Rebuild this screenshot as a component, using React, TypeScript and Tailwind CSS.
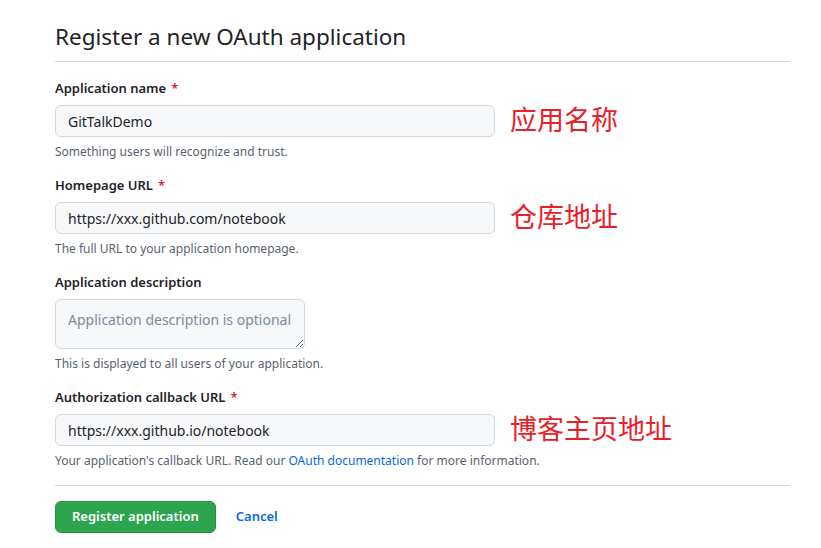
import React from 'react';

const font = { fontFamily: '"Noto Sans", "Liberation Sans", sans-serif' };

const Field: React.FC<{ label: string; required?: boolean; children: React.ReactNode; hint: React.ReactNode; note?: string }> = ({
  label,
  required,
  children,
  hint,
  note,
}) => (
  <div className="mb-[15px]">
    <div className="h-[20px] flex items-center text-[13px] font-semibold text-[#1f2328] mb-[6px]">
      {label}
      {required && <span className="text-[#d1242f] ml-[5px]">*</span>}
    </div>
    <div className="flex items-center">
      {children}
      {note && (
        <span className="ml-[15px] -mt-[6px] text-[27px] leading-none text-[#e8202a] font-['Noto_Sans_CJK_SC',sans-serif]">
          {note}
        </span>
      )}
    </div>
    <div className="mt-[6px] h-[18px] flex items-center text-[12px] text-[#59636e]">{hint}</div>
  </div>
);

const inputCls =
  'w-[440px] h-[32px] px-[12px] rounded-[6px] border border-[#d1d9e0] bg-[#f6f8fa] text-[14px] text-[#1f2328] outline-none';

export default function App() {
  return (
    <div className="w-[821px] h-[548px] bg-white overflow-hidden" style={font}>
      <div className="pl-[55px] pr-[31px] pt-[21px]">
        <h1 className="text-[22.5px] leading-[32px] text-[#1f2328] font-normal pb-[8px] border-b border-[#d1d9e0]">
          Register a new OAuth application
        </h1>
        <div className="pt-[17px]">
          <Field label="Application name" required hint="Something users will recognize and trust." note="应用名称">
            <input className={inputCls} defaultValue="GitTalkDemo" />
          </Field>
          <Field label="Homepage URL" required hint="The full URL to your application homepage." note="仓库地址">
            <input className={inputCls} defaultValue="https://xxx.github.com/notebook" />
          </Field>
          <Field label="Application description" hint="This is displayed to all users of your application.">
            <textarea
              className="w-[250px] h-[50px] px-[12px] pt-[10px] pb-[6px] rounded-[6px] border border-[#d1d9e0] bg-[#f6f8fa] text-[14px] leading-[20px] text-[#1f2328] placeholder:text-[#818b98] outline-none"
              placeholder="Application description is optional"
            />
          </Field>
          <Field
            label="Authorization callback URL"
            required
            note="博客主页地址"
            hint={
              <span>
                Your application's callback URL. Read our <a className="text-[#0969da]">OAuth documentation</a> for more
                information.
              </span>
            }
          >
            <input className={inputCls} defaultValue="https://xxx.github.io/notebook" />
          </Field>
          <div className="border-t border-[#d1d9e0] mt-[7px] pt-[15px] flex items-center">
            <button className="h-[32px] px-[16px] rounded-[6px] bg-[#2da44e] border border-[#2a9147] text-white text-[13px] font-semibold">
              Register application
            </button>
            <a className="ml-[20px] text-[13px] font-semibold text-[#0969da]">Cancel</a>
          </div>
        </div>
      </div>
    </div>
  );
}
